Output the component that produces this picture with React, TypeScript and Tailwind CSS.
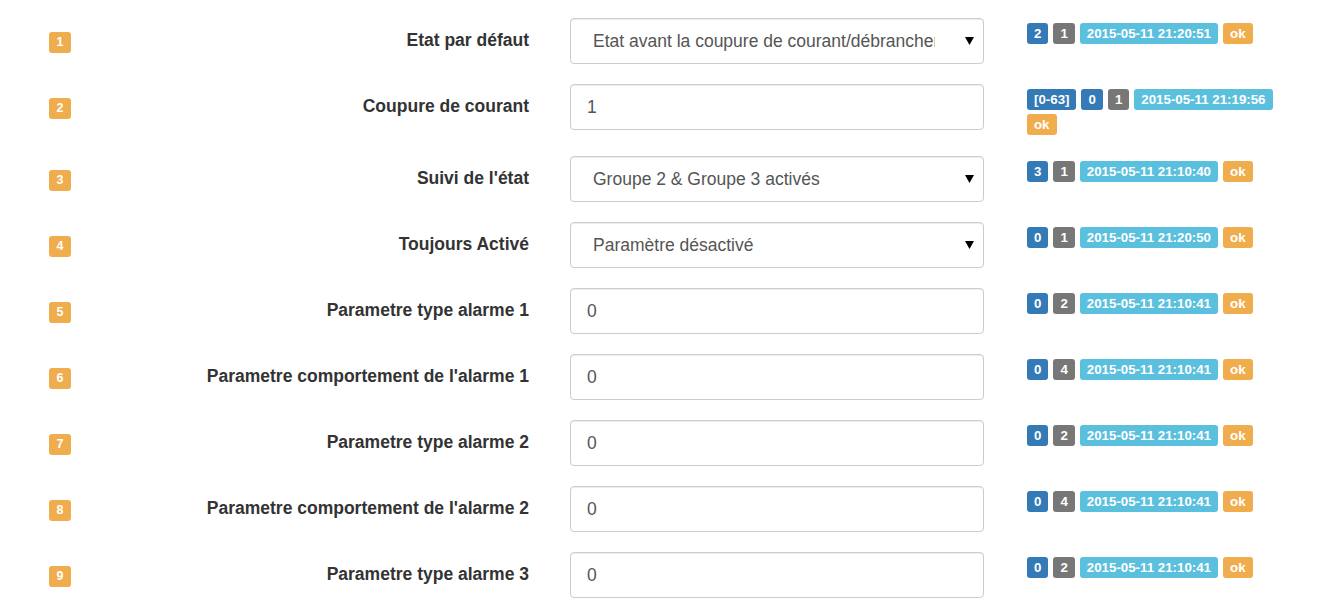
type Tag = { text: string; tone: 'primary' | 'default' | 'info' | 'warning' };

type Param = {
  id: number;
  label: string;
  value: string;
  select?: boolean;
  tags: Tag[];
};

const toneClass: Record<Tag['tone'], string> = {
  primary: 'bg-[#337ab7]',
  default: 'bg-[#777777]',
  info: 'bg-[#5bc0de]',
  warning: 'bg-[#f0ad4e]',
};

const stamp = (v: string, d: string, date: string, extra?: string): Tag[] => [
  ...(extra ? [{ text: extra, tone: 'primary' as const }] : []),
  { text: v, tone: 'primary' },
  { text: d, tone: 'default' },
  { text: date, tone: 'info' },
  { text: 'ok', tone: 'warning' },
];

const params: Param[] = [
  { id: 1, label: 'Etat par défaut', value: 'Etat avant la coupure de courant/débrancher', select: true, tags: stamp('2', '1', '2015-05-11 21:20:51') },
  { id: 2, label: 'Coupure de courant', value: '1', tags: stamp('0', '1', '2015-05-11 21:19:56', '[0-63]') },
  { id: 3, label: "Suivi de l'état", value: 'Groupe 2 & Groupe 3 activés', select: true, tags: stamp('3', '1', '2015-05-11 21:10:40') },
  { id: 4, label: 'Toujours Activé', value: 'Paramètre désactivé', select: true, tags: stamp('0', '1', '2015-05-11 21:20:50') },
  { id: 5, label: 'Parametre type alarme 1', value: '0', tags: stamp('0', '2', '2015-05-11 21:10:41') },
  { id: 6, label: "Parametre comportement de l'alarme 1", value: '0', tags: stamp('0', '4', '2015-05-11 21:10:41') },
  { id: 7, label: 'Parametre type alarme 2', value: '0', tags: stamp('0', '2', '2015-05-11 21:10:41') },
  { id: 8, label: "Parametre comportement de l'alarme 2", value: '0', tags: stamp('0', '4', '2015-05-11 21:10:41') },
  { id: 9, label: 'Parametre type alarme 3', value: '0', tags: stamp('0', '2', '2015-05-11 21:10:41') },
];

function Badge({ tag }: { tag: Tag }) {
  return (
    <span className={`inline-flex h-[21px] items-center rounded-[3px] px-[7px] text-[13.3px] font-bold leading-none text-white ${toneClass[tag.tone]}`}>
      {tag.text}
    </span>
  );
}

function Field({ p }: { p: Param }) {
  if (p.select) {
    return (
      <div className="flex h-[46px] w-[414px] items-center rounded-[4px] border border-[#cccccc] bg-white pl-[22px] pr-[9px] text-[17.5px] text-[#555555] shadow-[inset_0_1px_1px_rgba(0,0,0,0.075)]">
        <span className="min-w-0 flex-1 overflow-hidden whitespace-nowrap">{p.value}</span>
        <svg width="9" height="8" viewBox="0 0 9 8" className="ml-[30px] shrink-0">
          <path d="M0 0 H9 L4.5 8 Z" fill="#000" />
        </svg>
      </div>
    );
  }
  return (
    <div className="flex h-[46px] w-[414px] items-center rounded-[4px] border border-[#cccccc] bg-white pl-[16px] text-[17.5px] text-[#555555] shadow-[inset_0_1px_1px_rgba(0,0,0,0.075)]">
      {p.value}
    </div>
  );
}

export default function App() {
  return (
    <div className="min-h-screen bg-white pt-[18px] font-['Liberation_Sans',Arial,sans-serif]">
      {params.map((p) => (
        <div key={p.id} className="flex items-start pb-[20px] pl-[49px]">
          <div className="flex h-[46px] items-center">
            <span className="flex h-[21px] w-[22px] translate-y-[1px] items-center justify-center rounded-[3px] bg-[#f0ad4e] text-[12.5px] font-bold text-white">
              {p.id}
            </span>
            <label className="w-[458px] -translate-y-[1px] text-right text-[17.5px] font-bold text-[#333333]">{p.label}</label>
            <div className="ml-[41px]">
              <Field p={p} />
            </div>
          </div>
          <div className="ml-[43px] flex w-[264px] flex-wrap gap-x-[5px] gap-y-[4px] pb-[1px] pt-[5px]">
            {p.tags.map((t, i) => (
              <Badge key={i} tag={t} />
            ))}
          </div>
        </div>
      ))}
    </div>
  );
}
